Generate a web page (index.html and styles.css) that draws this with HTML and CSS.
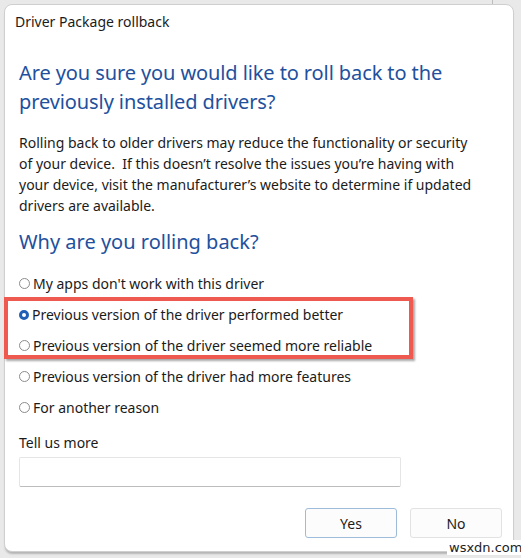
FILE: index.html
```html
<!DOCTYPE html>
<html>
<head>
<meta charset="utf-8">
<link rel="stylesheet" href="styles.css">
</head>
<body>
<div class="backdrop-line"></div>
<div class="dialog">
  <div class="title">Driver Package rollback</div>
  <div class="content">
    <h1 class="heading q1">Are you sure you would like to roll back to the previously installed drivers?</h1>
    <p class="body-text">Rolling back to older drivers may reduce the functionality or security of your device.&nbsp; If this doesn’t resolve the issues you’re having with your device, visit the manufacturer’s website to determine if updated drivers are available.</p>
    <h2 class="heading q2">Why are you rolling back?</h2>
    <div class="options">
      <div class="option"><span class="radio"></span><span>My apps don't work with this driver</span></div>
      <div class="highlight">
        <div class="option"><span class="radio checked"></span><span>Previous version of the driver performed better</span></div>
        <div class="option"><span class="radio"></span><span>Previous version of the driver seemed more reliable</span></div>
      </div>
      <div class="option"><span class="radio"></span><span>Previous version of the driver had more features</span></div>
      <div class="option"><span class="radio"></span><span>For another reason</span></div>
    </div>
    <div class="label">Tell us more</div>
    <div class="textbox"></div>
  </div>
  <div class="buttons">
    <div class="btn btn-default">Yes</div>
    <div class="btn">No</div>
  </div>
</div>
<div class="watermark">wsxdn.com</div>
</body>
</html>
```

FILE: styles.css
```css
html, body {
  margin: 0;
  padding: 0;
}
body {
  width: 521px;
  height: 558px;
  background: #e9e9e9;
  position: relative;
  overflow: hidden;
  font-family: "Noto Sans", "Open Sans", sans-serif;
  color: #1b1b1b;
}
.backdrop-line {
  position: absolute;
  left: 492px;
  top: 0;
  width: 1px;
  height: 6px;
  background: #bdbdbd;
}
.dialog {
  position: relative;
  margin: 4px 0 0 4px;
  width: 510px;
  height: 548px;
  box-sizing: border-box;
  background: #ffffff;
  border: 1px solid #cfcfcf;
  border-radius: 8px;
  box-shadow: 0 3px 2px -1px #b5b5b5;
  padding: 7px 11px 0 10px;
  display: flex;
  flex-direction: column;
}
.title {
  font-size: 14px;
  line-height: 20px;
  height: 20px;
}
.content {
  padding-left: 4px;
  display: flex;
  flex-direction: column;
}
.heading {
  margin: 0;
  font-weight: normal;
  color: #22509d;
  font-size: 20px;
  line-height: 29px;
}
.q1 {
  margin-top: 26px;
  width: 440px;
  letter-spacing: -0.1px;
}
.body-text {
  margin: 16px 0 0 0;
  font-size: 14px;
  line-height: 21px;
  width: 460px;
}
.q2 {
  margin-top: 11px;
}
.options {
  margin-top: 12px;
  display: flex;
  flex-direction: column;
}
.option {
  height: 31px;
  display: flex;
  align-items: center;
  font-size: 14px;
  gap: 3px;
}
.radio {
  width: 9px;
  height: 9px;
  border: 1px solid #8c8c8c;
  border-radius: 50%;
  box-sizing: content-box;
  flex: none;
}
.radio.checked {
  width: 4px;
  height: 4px;
  border: 3.5px solid #1f5fb5;
  background: #fff;
}
.highlight {
  position: relative;
}
.highlight::before {
  content: "";
  position: absolute;
  left: -15px;
  top: -2px;
  width: 401px;
  height: 54px;
  border: 4px solid #ee5a4f;
  box-shadow: 2px 2px 2px rgba(0,0,0,0.35);
  pointer-events: none;
}
.label {
  margin-top: 10px;
  font-size: 14px;
  line-height: 20px;
}
.textbox {
  margin-top: 4px;
  width: 382px;
  height: 30px;
  box-sizing: border-box;
  border: 1px solid #e5e5e5;
  border-bottom-color: #bdbdbd;
  border-radius: 2px;
  background: #fff;
}
.buttons {
  margin-top: 21px;
  display: flex;
  justify-content: flex-end;
  gap: 13px;
}
.btn {
  width: 92px;
  height: 30px;
  box-sizing: border-box;
  border: 1px solid #e2e2e2;
  border-radius: 3px;
  background: #fcfcfc;
  display: flex;
  align-items: center;
  justify-content: center;
  font-size: 14px;
}
.btn-default {
  border-color: #9dbcd9;
}
.watermark {
  position: absolute;
  left: 447px;
  top: 540px;
  padding: 0 2px;
  background: #fff;
  font-family: "DejaVu Sans", sans-serif;
  font-size: 13px;
  line-height: 15px;
  color: #222;
}
```
